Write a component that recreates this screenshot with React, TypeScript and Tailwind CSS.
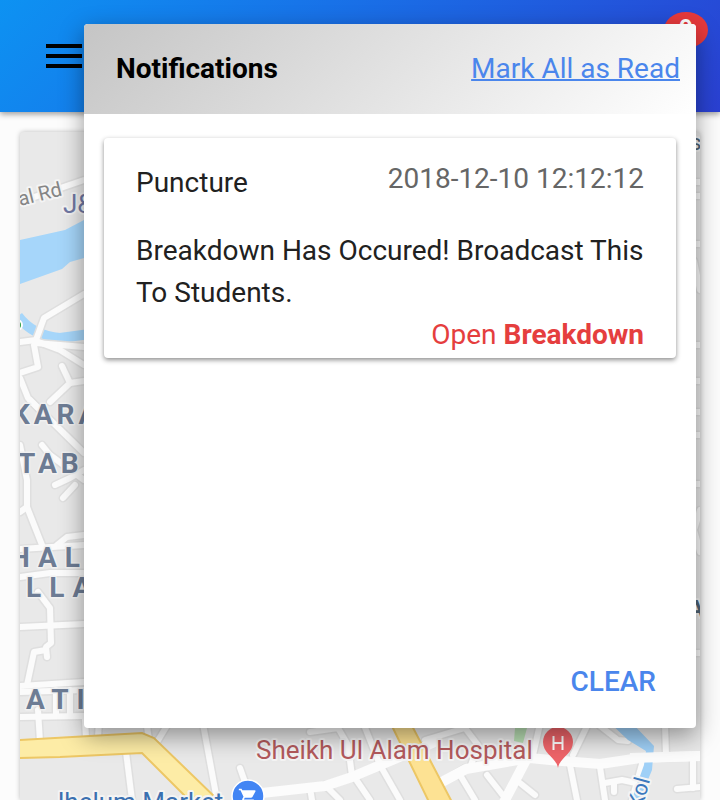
import React from "react";
import { MdShoppingCart } from "react-icons/md";

const minorRoads = [
  "M20 202L84 180", "M84 294L44 318L36 340L20 342", "M36 341L60 350L84 365", "M36 343L84 347",
  "M34 345L38 367L20 373", "M62 366L70 383L50 402", "M70 383L84 381", "M20 378L28 398L40 410",
  "M30 400L84 453", "M20 445L27 480L27 507L42 545", "M42 445L50 455L84 480", "M55 485L70 478L84 470",
  "M63 498L75 485", "M20 512L27 507", "M57 545L67 537L84 535", "M20 549L84 545", "M20 577L50 573L84 573",
  "M38 592L50 608L51 643L46 647L47 657", "M46 650L34 652L27 685", "M20 627L84 624", "M20 686L84 682",
  "M20 692L84 690", "M20 717L84 716", "M38 710L40 742", "M56 690L56 716", "M70 690L70 716",
  "M85 720L86 738", "M99 720L98 738", "M126 752L132 800", "M147 726L149 740", "M168 724L157 742",
  "M203 724L217 800", "M352 776L348 745L338 728L310 732", "M362 720L380 765L400 800",
  "M355 778L370 800", "M325 785L340 800", "M310 788L312 800", "M240 768L246 785",
  "M440 783L465 768", "M460 775L475 800", "M470 768L478 745L465 728L425 740", "M487 775L505 798",
  "M520 783L535 795", "M540 724L533 755", "M588 724L573 755", "M600 726L618 740L628 741",
  "M665 724L666 755", "M570 765L577 800", "M600 767L605 800", "M605 783L622 780L636 783",
  "M614 783L614 792", "M642 764L632 800", "M693 760L693 788", "M677 789L700 787",
  "M694 182L700 182", "M694 196L700 196", "M694 244L700 244", "M694 261L700 290", "M694 345L700 345",
  "M694 381L700 381", "M694 412L700 412", "M694 435L700 435", "M694 484L700 484", "M700 510L694 530L700 552",
  "M694 653L700 653",
];

const mainRoads = ["M262 793L325 786L352 777L435 742", "M440 783L466 769L530 758L550 760L600 764L640 758L700 756", "M526 760L503 804"];

const districts = [
  { name: "KARA", x: 12, y: 424, spacing: 4 },
  { name: "TAB", x: 18, y: 473, spacing: 4 },
  { name: "HAL", x: 10, y: 567, spacing: 8 },
  { name: "LLA", x: 26, y: 597, spacing: 8 },
  { name: "ATI", x: 26, y: 709, spacing: 8 },
];

function CityMap() {
  return (
    <svg
      viewBox="20 132 680 668"
      preserveAspectRatio="xMinYMin slice"
      className="block min-h-0 w-full flex-1 rounded-t bg-[#e9e9e9] shadow-[0_0_5px_rgba(0,0,0,0.25)]"
      role="img"
      aria-label="Map"
    >
      <path d="M20 240L65 230L84 220L100 212V252L84 258L70 262L62 269L20 284Z" fill="#a6d6fa" />
      <path d="M18 316C30 332 46 337 60 338L90 334" fill="none" stroke="#a6d6fa" strokeWidth="10" />
      <circle cx="17" cy="325" r="5" fill="#2f9e44" stroke="#fff" strokeWidth="2" />
      <path d="M515 728H527L523 743L514 741Z" fill="#b9dfb4" />
      <g fill="none" strokeLinejoin="round" strokeLinecap="round">
        <g stroke="#dfdfdf" strokeWidth="9">
          {minorRoads.map((d) => <path key={d} d={d} />)}
        </g>
        <g stroke="#fbfbfb" strokeWidth="6">
          {minorRoads.map((d) => <path key={d} d={d} />)}
        </g>
        <g stroke="#fcfcfc" strokeWidth="10">
          {mainRoads.map((d) => <path key={d} d={d} />)}
        </g>
      </g>
      <path d="M607 720L631 722L654 746L652 770L638 804H630L644 765L646 751L628 740Z" fill="#9fd0f7" />
      <path d="M630 758L700 756" stroke="#fcfcfc" strokeWidth="10" />
      <path d="M18 740L142 733L154 738L220 802H191L142 753L60 757L18 758Z" fill="#fdeca6" stroke="#edc765" strokeWidth="2" />
      <path d="M390 722L430 804H453L410 722Z" fill="#fde293" stroke="#edc765" strokeWidth="2" />

      <g className="font-['Roboto',sans-serif]" paintOrder="stroke" strokeLinejoin="round">
        <g stroke="#f1f1f1" strokeWidth="3" fontSize="28" fontWeight="700" fill="#6d7c94">
          {districts.map((d) => (
            <text key={d.name} x={d.x} y={d.y} letterSpacing={d.spacing}>{d.name}</text>
          ))}
        </g>
        <g stroke="#f4f4f4" strokeWidth="4">
          <text x="20" y="206" transform="rotate(-14 20 206)" fontSize="20" fill="#858585">al Rd</text>
          <text x="63" y="213" fontSize="26" fill="#7078a4">J&amp;K</text>
          <text x="256" y="759" fontSize="26" fill="#b35a5c">Sheikh Ul Alam Hospital</text>
          <text x="50" y="811" fontSize="26" fill="#3b70b0">Jhelum Market</text>
          <text x="642" y="810" transform="rotate(-75 642 810)" fontSize="22" fill="#3b78bd">Kol</text>
          <text x="690" y="150" fontSize="22" fill="#4f6375">s</text>
          <text x="688" y="617" fontSize="24" fontWeight="700" fill="#4f6375">A</text>
        </g>
      </g>

      <circle cx="248" cy="796" r="16" fill="#4285f4" stroke="#fff" strokeWidth="1.5" />
      <MdShoppingCart x={238} y={787} size={20} color="#fff" />
      <path d="M558 768C556 757 543 754 543 742A15 15 0 0 1 573 742C573 754 560 757 558 768Z" fill="#ee6469" />
      <path d="M553.500 736V750M562.500 736V750M553.500 743H562.500" stroke="#fff" strokeWidth="2" />
    </svg>
  );
}

export default function App() {
  return (
    <div className="relative flex h-screen flex-col overflow-hidden bg-[#fcfcfc] font-['Roboto',sans-serif] text-[28px]">
      <header className="z-0 flex h-28 shrink-0 items-center justify-between bg-[linear-gradient(135deg,#0d92f2_0%,#1872e8_40%,#2a40d2_100%)] pr-3 pl-[46px] shadow-[0_2px_6px_rgba(0,0,0,0.4)]">
        <button type="button" aria-label="Open menu">
          <svg className="block h-6 w-9" viewBox="0 0 36 24">
            <path d="M0 2H36M0 12H36M0 22H36" stroke="#000" strokeWidth="4" />
          </svg>
        </button>
        <span className="mt-3 flex h-9 w-11 justify-center self-start rounded-[50%] bg-[#e73a3c] text-[24px] leading-8 font-bold text-white">
          9
        </span>
      </header>
      <main className="flex min-h-0 flex-1 flex-col px-5 pt-5">
        <CityMap />
      </main>

      <section
        role="dialog"
        aria-labelledby="notifications-title"
        className="absolute top-6 right-6 left-[84px] rounded bg-white shadow-[0_8px_24px_rgba(0,0,0,0.4)]"
      >
        <div className="flex h-[90px] items-center justify-between rounded-t bg-[linear-gradient(135deg,#c5c5c5_0%,#ffffff_100%)] pr-4 pl-8">
          <h1 id="notifications-title" className="font-bold text-black">Notifications</h1>
          <a href="#read" className="text-[#4a86ec] underline decoration-2">Mark All as Read</a>
        </div>
        <div className="min-h-[542px] px-5 pt-6">
          <article className="rounded bg-white px-8 pt-5 pb-0.5 text-[#212121] shadow-[0_2px_5px_rgba(0,0,0,0.45)]">
            <div className="flex items-start justify-between">
              <h2 className="pt-1 leading-[42px]">Puncture</h2>
              <time className="leading-[42px] text-[#666]">2018-12-10 12:12:12</time>
            </div>
            <p className="pt-[26px] leading-[42px]">Breakdown Has Occured! Broadcast This To Students.</p>
            <a href="#breakdown" className="block text-right leading-[42px] text-[#e53e3e]">
              Open <b className="font-bold">Breakdown</b>
            </a>
          </article>
        </div>
        <footer className="flex h-18 items-start justify-end px-6">
          <button type="button" className="px-4 py-2 leading-[36px] font-medium text-[#4a86ec]">CLEAR</button>
        </footer>
      </section>
    </div>
  );
}
